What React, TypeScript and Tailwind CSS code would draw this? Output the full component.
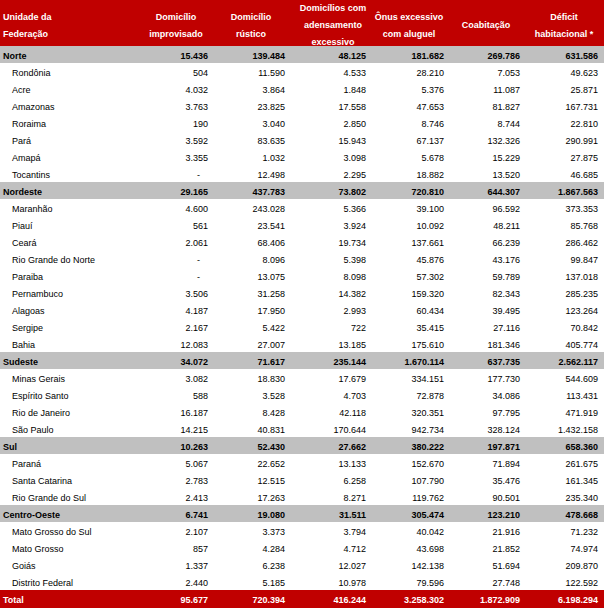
import React from "react";

type Row = { name: string; vals: string[]; kind: "region" | "state" | "total" };

const raw: [string, string, string[]][] = [
  ["r", "Norte", ["15.436", "139.484", "48.125", "181.682", "269.786", "631.586"]],
  ["s", "Rondônia", ["504", "11.590", "4.533", "28.210", "7.053", "49.623"]],
  ["s", "Acre", ["4.032", "3.864", "1.848", "5.376", "11.087", "25.871"]],
  ["s", "Amazonas", ["3.763", "23.825", "17.558", "47.653", "81.827", "167.731"]],
  ["s", "Roraima", ["190", "3.040", "2.850", "8.746", "8.744", "22.810"]],
  ["s", "Pará", ["3.592", "83.635", "15.943", "67.137", "132.326", "290.991"]],
  ["s", "Amapá", ["3.355", "1.032", "3.098", "5.678", "15.229", "27.875"]],
  ["s", "Tocantins", ["-", "12.498", "2.295", "18.882", "13.520", "46.685"]],
  ["r", "Nordeste", ["29.165", "437.783", "73.802", "720.810", "644.307", "1.867.563"]],
  ["s", "Maranhão", ["4.600", "243.028", "5.366", "39.100", "96.592", "373.353"]],
  ["s", "Piauí", ["561", "23.541", "3.924", "10.092", "48.211", "85.768"]],
  ["s", "Ceará", ["2.061", "68.406", "19.734", "137.661", "66.239", "286.462"]],
  ["s", "Rio Grande do Norte", ["-", "8.096", "5.398", "45.876", "43.176", "99.847"]],
  ["s", "Paraiba", ["-", "13.075", "8.098", "57.302", "59.789", "137.018"]],
  ["s", "Pernambuco", ["3.506", "31.258", "14.382", "159.320", "82.343", "285.235"]],
  ["s", "Alagoas", ["4.187", "17.950", "2.993", "60.434", "39.495", "123.264"]],
  ["s", "Sergipe", ["2.167", "5.422", "722", "35.415", "27.116", "70.842"]],
  ["s", "Bahia", ["12.083", "27.007", "13.185", "175.610", "181.346", "405.774"]],
  ["r", "Sudeste", ["34.072", "71.617", "235.144", "1.670.114", "637.735", "2.562.117"]],
  ["s", "Minas Gerais", ["3.082", "18.830", "17.679", "334.151", "177.730", "544.609"]],
  ["s", "Espírito Santo", ["588", "3.528", "4.703", "72.878", "34.086", "113.431"]],
  ["s", "Rio de Janeiro", ["16.187", "8.428", "42.118", "320.351", "97.795", "471.919"]],
  ["s", "São Paulo", ["14.215", "40.831", "170.644", "942.734", "328.124", "1.432.158"]],
  ["r", "Sul", ["10.263", "52.430", "27.662", "380.222", "197.871", "658.360"]],
  ["s", "Paraná", ["5.067", "22.652", "13.133", "152.670", "71.894", "261.675"]],
  ["s", "Santa Catarina", ["2.783", "12.515", "6.258", "107.790", "35.476", "161.345"]],
  ["s", "Rio Grande do Sul", ["2.413", "17.263", "8.271", "119.762", "90.501", "235.340"]],
  ["r", "Centro-Oeste", ["6.741", "19.080", "31.511", "305.474", "123.210", "478.668"]],
  ["s", "Mato Grosso do Sul", ["2.107", "3.373", "3.794", "40.042", "21.916", "71.232"]],
  ["s", "Mato Grosso", ["857", "4.284", "4.712", "43.698", "21.852", "74.974"]],
  ["s", "Goiás", ["1.337", "6.238", "12.027", "142.138", "51.694", "209.870"]],
  ["s", "Distrito Federal", ["2.440", "5.185", "10.978", "79.596", "27.748", "122.592"]],
];

const rows: Row[] = raw.map(([k, name, vals]) => ({
  name,
  vals,
  kind: k === "r" ? "region" : "state",
}));

const totalRow: Row = {
  name: "Total",
  vals: ["95.677", "720.394", "416.244", "3.258.302", "1.872.909", "6.198.294"],
  kind: "total",
};

const padRight = ["pr-[4px]", "pr-[5px]", "pr-[4px]", "pr-[4px]", "pr-[4px]", "pr-[6px]"];

const gridCols = "grid grid-cols-[140px_72px_78px_80px_78px_76px_80px]";

function DataRow({ row }: { row: Row }) {
  const bg =
    row.kind === "region"
      ? "bg-[#c0c0c0] font-bold text-black"
      : row.kind === "total"
      ? "bg-[#c00000] font-bold text-white"
      : "bg-white text-black";
  const h = row.kind === "total" ? "h-[18px]" : "h-[17px]";
  return (
    <div className={`${gridCols} ${bg} ${h} text-[9px] leading-none`}>
      <div className={`flex items-center pt-[3px] ${row.kind === "state" ? "pl-[12px]" : "pl-[3px]"}`}>
        {row.name}
      </div>
      {row.vals.map((v, i) => (
        <div key={i} className={`flex items-center justify-end pt-[3px] ${padRight[i]}`}>
          <span className={v === "-" ? "mr-[8px]" : ""}>{v}</span>
        </div>
      ))}
    </div>
  );
}

export default function App() {
  return (
    <div
      className="w-[604px] h-[608px] overflow-hidden bg-white"
      style={{ fontFamily: '"Liberation Sans", Arial, sans-serif' }}
    >
      <div className={`${gridCols} h-[46px] bg-[#c00000] text-white font-bold text-[9px] leading-[17px]`}>
        <div className="flex items-center pl-[3px]">
          <span>
            Unidade da
            <br />
            Federação
          </span>
        </div>
        <div className="flex items-center justify-center text-center">
          <span>
            Domicílio
            <br />
            improvisado
          </span>
        </div>
        <div className="flex items-center justify-center text-center">
          <span>
            Domicílio
            <br />
            rústico
          </span>
        </div>
        <div className="flex items-center justify-center text-center pl-[6px]">
          <span>
            Domicílios com
            <br />
            adensamento
            <br />
            excessivo
          </span>
        </div>
        <div className="flex items-center justify-center text-center">
          <span>
            Ônus excessivo
            <br />
            com aluguel
          </span>
        </div>
        <div className="flex items-center justify-center text-center">
          <span>Coabitação</span>
        </div>
        <div className="flex items-center justify-center text-center">
          <span>
            Déficit
            <br />
            habitacional *
          </span>
        </div>
      </div>
      {rows.map((r, i) => (
        <DataRow key={i} row={r} />
      ))}
      <DataRow row={totalRow} />
    </div>
  );
}
